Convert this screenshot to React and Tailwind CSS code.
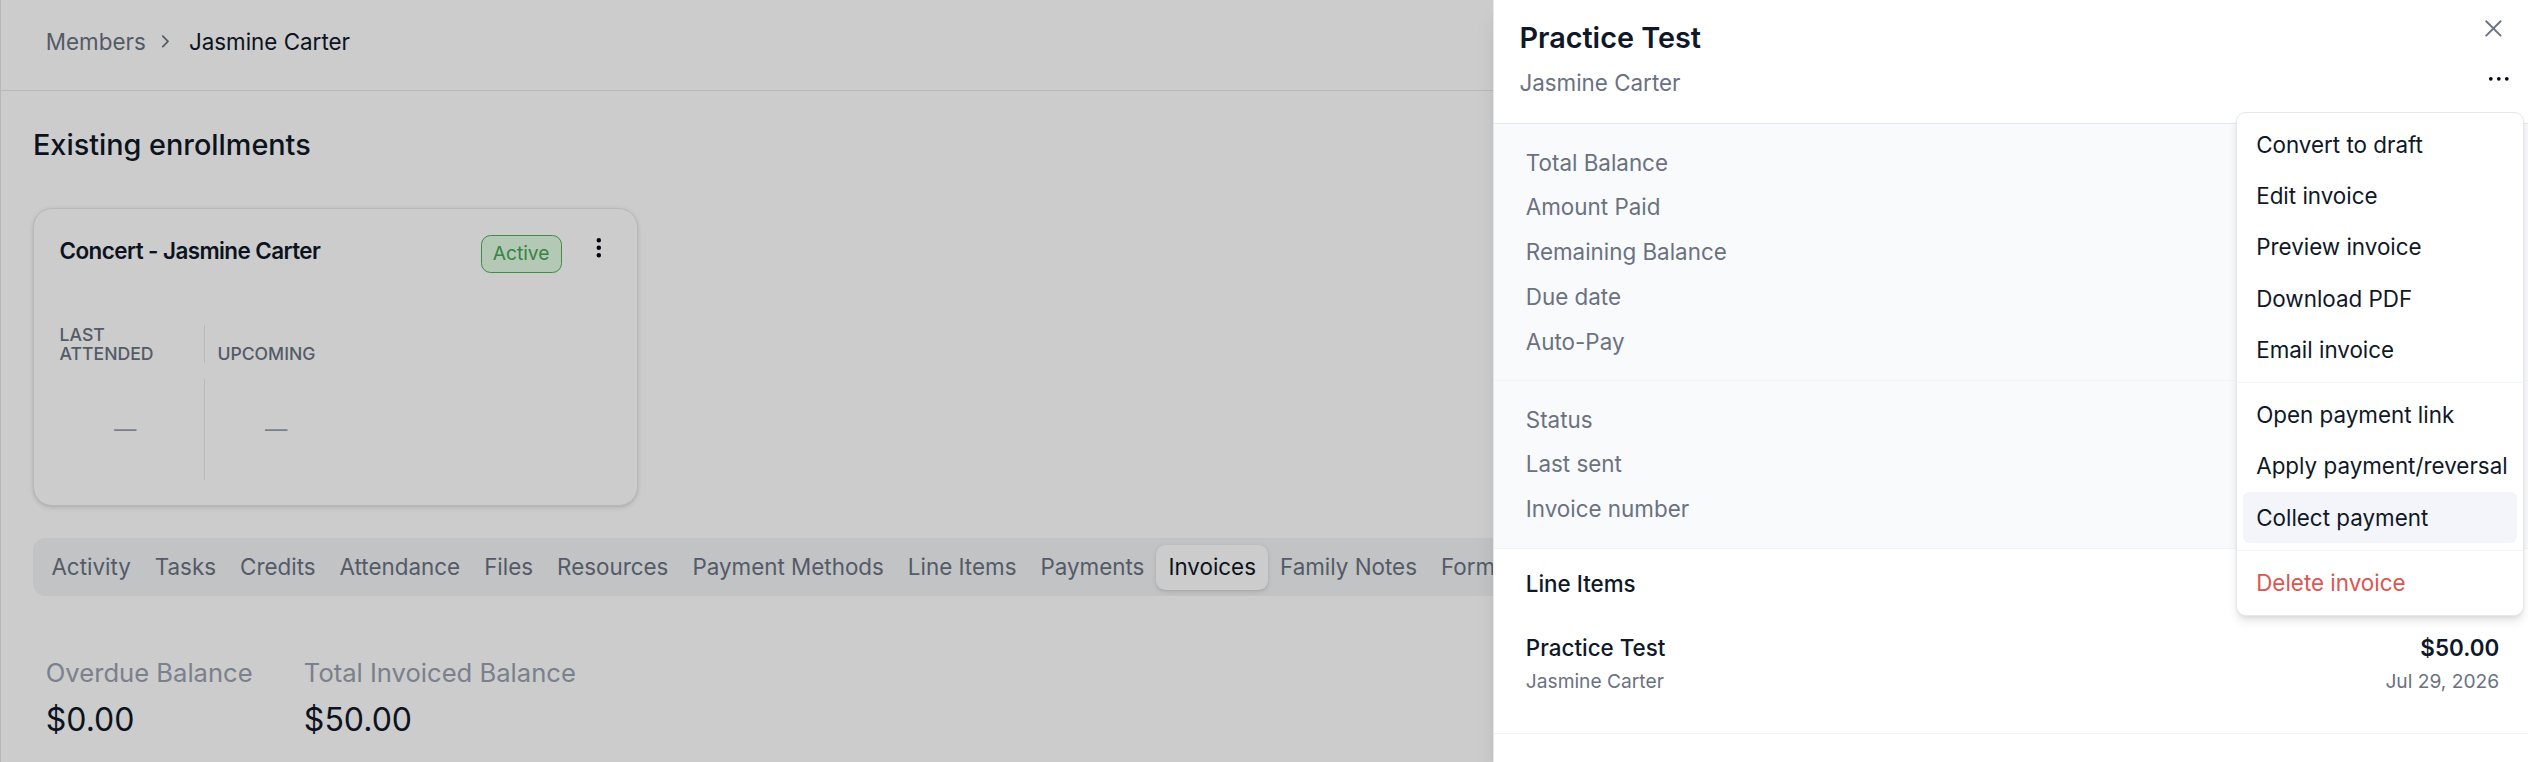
import React from "react";
import { ChevronRight, EllipsisVertical, X } from "lucide-react";

const tabs = [
  "Activity",
  "Tasks",
  "Credits",
  "Attendance",
  "Files",
  "Resources",
  "Payment Methods",
  "Line Items",
  "Payments",
  "Invoices",
  "Family Notes",
  "Forms",
];

const balanceRows = ["Total Balance", "Amount Paid", "Remaining Balance", "Due date", "Auto-Pay"];

const detailRows = ["Status", "Last sent", "Invoice number"];

const menuGroups = [
  ["Convert to draft", "Edit invoice", "Preview invoice", "Download PDF", "Email invoice"],
  ["Open payment link", "Apply payment/reversal", "Collect payment"],
  ["Delete invoice"],
];

function Dots() {
  return (
    <svg width="16" height="16" viewBox="0 0 16 16" fill="currentColor" aria-hidden="true">
      <circle cx="3" cy="8" r="1.15" />
      <circle cx="8" cy="8" r="1.15" />
      <circle cx="13" cy="8" r="1.15" />
    </svg>
  );
}

function EnrollmentCard() {
  return (
    <div className="mt-[25px] w-[378px] rounded-xl border border-gray-200 bg-white p-4 shadow-sm">
      <div className="flex items-start justify-between">
        <h3 className="text-sm leading-5 font-semibold tracking-[-0.025em] text-gray-900">
          Concert - Jasmine Carter
        </h3>
        <div className="flex items-start gap-[15px]">
          <span className="rounded-md border border-[#4fae5a] bg-[#e2fbe4] px-[7px] py-[3px] text-xs leading-[17px] text-[#45a552]">
            Active
          </span>
          <button className="text-gray-950">
            <EllipsisVertical size={16} strokeWidth={2.2} />
          </button>
        </div>
      </div>
      <div className="mt-8 grid grid-cols-[90px_90px] gap-y-2.5">
        <div className="flex h-6 items-end pr-2 text-[11px] leading-3 font-medium text-gray-500 uppercase">
          Last attended
        </div>
        <div className="flex h-6 items-end border-l border-gray-200 pl-2 text-[11px] leading-3 font-medium text-gray-500 uppercase">
          Upcoming
        </div>
        <div className="flex h-[63px] items-center justify-center pr-2 text-sm text-gray-400">—</div>
        <div className="flex h-[63px] items-center justify-center border-l border-gray-200 px-2 text-sm text-gray-400">
          —
        </div>
      </div>
    </div>
  );
}

function MemberPage() {
  return (
    <div className="h-full border-l border-gray-200">
      <header className="flex h-[57px] items-start border-b border-gray-200 px-7 pt-4 text-sm leading-5">
        <span className="text-gray-500">Members</span>
        <ChevronRight size={13} className="mt-[3.5px] mr-2 ml-1.5 text-gray-500" />
        <span className="text-gray-900">Jasmine Carter</span>
      </header>
      <main className="px-5 pt-5">
        <h2 className="text-lg leading-7 font-medium text-gray-900">Existing enrollments</h2>
        <EnrollmentCard />
        <nav className="mt-5 flex overflow-hidden rounded-lg bg-gray-100 p-1">
          {tabs.map((t) =>
            t === "Invoices" ? (
              <span
                key={t}
                className="rounded-md bg-white px-[7.5px] py-1 text-sm leading-5 whitespace-nowrap text-gray-900 shadow-sm"
              >
                {t}
              </span>
            ) : (
              <span key={t} className="rounded-md px-[7.5px] py-1 text-sm leading-5 whitespace-nowrap text-gray-500">
                {t}
              </span>
            )
          )}
        </nav>
        <div className="mt-9 flex gap-8 px-2">
          <div>
            <div className="text-base leading-6 text-gray-400">Overdue Balance</div>
            <div className="mt-1 text-xl leading-7 text-gray-900">$0.00</div>
          </div>
          <div>
            <div className="text-base leading-6 text-gray-400">Total Invoiced Balance</div>
            <div className="mt-1 text-xl leading-7 text-gray-900">$50.00</div>
          </div>
        </div>
      </main>
    </div>
  );
}

function InfoRow({ label }) {
  return (
    <div className="flex h-7 items-center text-sm">
      <span className="text-gray-500">{label}</span>
    </div>
  );
}

function ActionsMenu() {
  return (
    <div className="absolute top-[70px] right-[2.5px] w-[180px] rounded-md border border-gray-200 bg-white p-1 shadow-md">
      {menuGroups.map((group, gi) => (
        <div key={gi}>
          {gi > 0 && <div className="-mx-1 my-1 h-px bg-gray-100" />}
          {group.map((item) => (
            <div
              key={item}
              className={
                item === "Collect payment"
                  ? "rounded-sm bg-[#f4f5fa] px-2 py-1.5 text-sm leading-5 whitespace-nowrap text-gray-900"
                  : item === "Delete invoice"
                    ? "rounded-sm px-2 py-1.5 text-sm leading-5 whitespace-nowrap text-[#dd5550]"
                    : "rounded-sm px-2 py-1.5 text-sm leading-5 whitespace-nowrap text-gray-900"
              }
            >
              {item}
            </div>
          ))}
        </div>
      ))}
    </div>
  );
}

function InvoiceSheet() {
  return (
    <aside className="absolute inset-y-0 right-0 w-[647px] border-l border-gray-200 bg-white shadow-lg">
      <div className="flex items-start justify-between border-b border-gray-200 pt-2.5 pr-[10px] pb-[15px] pl-4">
        <div>
          <h2 className="text-lg leading-7 font-semibold text-gray-900">Practice Test</h2>
          <p className="mt-1 text-sm leading-5 text-gray-500">Jasmine Carter</p>
        </div>
        <div className="flex flex-col items-end">
          <button className="-mt-px mr-[2.5px] text-gray-500">
            <X size={18} strokeWidth={1.6} />
          </button>
          <button className="mt-[14px] text-gray-950">
            <Dots />
          </button>
        </div>
      </div>

      <div className="border-b border-gray-100 bg-gray-50">
        <div className="px-5 py-2.5">
          {balanceRows.map((l) => (
            <InfoRow key={l} label={l} />
          ))}
        </div>
        <div className="border-t border-gray-100 px-5 py-2.5">
          {detailRows.map((l) => (
            <InfoRow key={l} label={l} />
          ))}
        </div>
      </div>

      <div>
        <h3 className="px-5 pt-3 pb-2 text-sm leading-5 font-medium text-gray-900">Line Items</h3>
        <div className="flex justify-between border-b border-gray-100 pt-3 pr-[18px] pb-6 pl-5">
          <div>
            <div className="text-sm leading-5 font-medium text-gray-900">Practice Test</div>
            <div className="mt-[3px] text-xs leading-4 text-gray-500">Jasmine Carter</div>
          </div>
          <div className="text-right">
            <div className="text-sm leading-5 font-semibold text-gray-900">$50.00</div>
            <div className="mt-[3px] text-xs leading-4 text-gray-500">Jul 29, 2026</div>
          </div>
        </div>
      </div>

      <ActionsMenu />
    </aside>
  );
}

export default function App() {
  return (
    <div className="relative h-[476.25px] w-[1580px] overflow-hidden bg-white text-gray-900 [font-family:Inter,sans-serif] [zoom:1.6]">
      <MemberPage />
      <div className="absolute inset-0 bg-black/20" />
      <InvoiceSheet />
    </div>
  );
}
